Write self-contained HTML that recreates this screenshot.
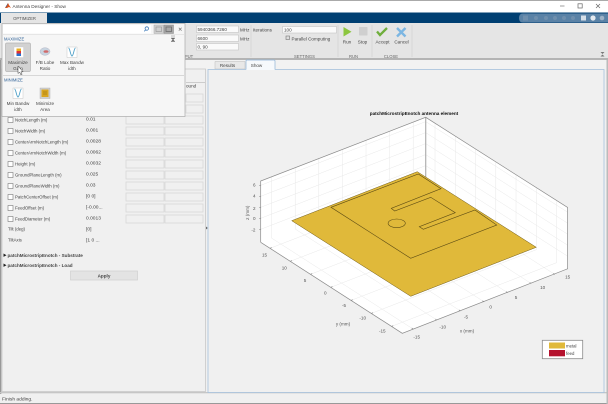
<!DOCTYPE html>
<html><head><meta charset="utf-8"><style>
html,body{margin:0;padding:0;background:#f0f0f0;width:608px;height:404px;overflow:hidden}
svg{position:absolute;left:0;top:0;filter:blur(.3px)}
text{font-family:"Liberation Sans",sans-serif;font-size:4.6px;fill:#444}
.c{text-anchor:middle}
.b{fill:#f0f0f0;stroke:#d4d4d4;stroke-width:.7}
.f{fill:#fafafa;stroke:#c4c4c4;stroke-width:.6}
.cb{fill:#fff;stroke:#777;stroke-width:.6}
.g{stroke:#e8e8e8;stroke-width:.5;fill:none}
.e{stroke:#8a8a8a;stroke-width:.7;fill:none}
#rows text{font-size:4.35px}
#rows text.v,text.v{font-size:4.9px}
.plot text{fill:#555;font-size:4.6px}
</style></head><body>
<svg width="608" height="404" viewBox="0 0 608 404" xmlns="http://www.w3.org/2000/svg">
<!-- chrome -->
<rect width="608" height="404" fill="#f0f0f0"/>
<rect width="608" height="13" fill="#fff"/>
<rect width="608" height="1" fill="#aaa"/>
<path d="M5 8l3-5 1 2 2 3-2-1-2 1z" fill="#d9541e"/>
<path d="M5 8l2-2 1-3z" fill="#2a5c9a"/>
<text x="12.500" y="7.800" style="font-size:4.700px">Antenna Designer - Show</text>
<path d="M560 6h4.500" stroke="#888" stroke-width=".8"/>
<rect x="578" y="3.800" width="4.200" height="4.200" fill="none" stroke="#666" stroke-width=".7"/>
<path d="M596 4l4 4m0-4l-4 4" stroke="#666" stroke-width=".7"/>
<rect y="12.500" width="608" height="10.500" fill="#003f72"/>
<path d="M523 13.500H608V22.500H523Q519 22.500 519 18T523 13.500Z" fill="#5a82a6"/>
<g fill="#6f8fad"><rect x="523" y="15.500" width="5" height="5"/><circle cx="536" cy="18" r="2"/><circle cx="546" cy="18" r="2"/><circle cx="555" cy="18" r="2"/><circle cx="564" cy="18" r="2"/><circle cx="573" cy="18" r="2"/></g>
<rect x="581" y="15.500" width="5" height="5" fill="#d5dfe8"/><circle cx="593" cy="18" r="2.600" fill="#e4eaf0"/><circle cx="602" cy="18" r="2.300" fill="#9db2c6"/>
<rect x="1" y="13" width="46" height="11" fill="#e5e5e5"/>
<text x="24.500" y="20.200" class="c" style="font-size:4.200px;fill:#555">OPTIMIZER</text>
<!-- ribbon -->
<rect y="23" width="608" height="35" fill="#e5e5e5"/>
<rect y="58" width="608" height="2" fill="#b4b4b4"/>
<rect y="60" width="608" height="9" fill="#f2f2f2"/>
<g stroke="#d2d2d2" stroke-width=".7"><path d="M251 25V57M338 25V57M372 25V57M412 25V57"/></g>
<rect class="f" x="196.500" y="26" width="42" height="6.500"/>
<rect class="f" x="196.500" y="35" width="42" height="6.500"/>
<rect class="f" x="196.500" y="43.500" width="42" height="6.500"/>
<text x="197.500" y="31">5940366.7260</text><text x="197.500" y="40">6600</text><text x="197.500" y="48.500">0, 90</text>
<text x="240" y="31.500">MHz</text><text x="240" y="40.500">MHz</text>
<text x="253" y="31.500">Iterations</text>
<rect class="f" x="282.500" y="26.500" width="54" height="6.500"/>
<text x="284" y="31.500">100</text>
<rect x="286" y="36" width="3.500" height="3.500" fill="#ddd" stroke="#777" stroke-width=".6"/>
<text x="291.500" y="40.300">Parallel Computing</text>
<text x="304.500" y="58" class="c" style="font-size:4.200px;fill:#666">SETTINGS</text>
<text x="353.500" y="58" class="c" style="font-size:4.200px;fill:#666">RUN</text>
<text x="391" y="58" class="c" style="font-size:4.200px;fill:#666">CLOSE</text>
<text x="189" y="58" class="c" style="font-size:4.200px;fill:#666">PUT</text>
<path d="M343.500 27V36.500L351.500 31.700Z" fill="#8cc63f"/>
<rect x="359" y="27" width="8.500" height="8.500" rx=".5" fill="#cfcfcf"/>
<text x="347" y="43.500" class="c">Run</text><text x="362.500" y="43.500" class="c">Stop</text>
<path d="M377 31.500l3 3.500 7-7" stroke="#6fae3c" stroke-width="2.300" fill="none"/>
<path d="M397 28l8.500 8.500m0-8.500l-8.500 8.500" stroke="#7cb6e2" stroke-width="2.400" fill="none"/>
<text x="382.500" y="43.500" class="c">Accept</text><text x="401.500" y="43.500" class="c">Cancel</text>
<path d="M600.500 52h4l-2 2zM600.500 56.500h4l-2-2z" fill="#777"/>
<!-- left panel -->
<rect x="0" y="60" width="1.300" height="334" fill="#999"/>
<rect x="2" y="69" width="203.500" height="322.500" fill="#f0f0f0" stroke="#c8c8c8" stroke-width=".8"/>
<rect x="186" y="82" width="19" height="1" fill="#ccc"/>
<text x="186" y="87.500">ound</text>
<rect class="b" x="186" y="94" width="17" height="8"/><rect class="b" x="186" y="105" width="17" height="8"/>
<g id="rows">
<rect class="b" x="126" y="116" width="38" height="8"/><rect class="b" x="165" y="116" width="38" height="8"/>
<rect class="b" x="126" y="127" width="38" height="8"/><rect class="b" x="165" y="127" width="38" height="8"/>
<rect class="b" x="126" y="138" width="38" height="8"/><rect class="b" x="165" y="138" width="38" height="8"/>
<rect class="b" x="126" y="149" width="38" height="8"/><rect class="b" x="165" y="149" width="38" height="8"/>
<rect class="b" x="126" y="160" width="38" height="8"/><rect class="b" x="165" y="160" width="38" height="8"/>
<rect class="b" x="126" y="171" width="38" height="8"/><rect class="b" x="165" y="171" width="38" height="8"/>
<rect class="b" x="126" y="182" width="38" height="8"/><rect class="b" x="165" y="182" width="38" height="8"/>
<rect class="b" x="126" y="193" width="38" height="8"/><rect class="b" x="165" y="193" width="38" height="8"/>
<rect class="b" x="126" y="204" width="38" height="8"/><rect class="b" x="165" y="204" width="38" height="8"/>
<rect class="b" x="126" y="215" width="38" height="8"/><rect class="b" x="165" y="215" width="38" height="8"/>
<rect class="cb" x="8" y="117.500" width="5" height="5"/><text x="15" y="121.600">NotchLength (m)</text><text class="v" x="86" y="120.300">0.01</text>
<rect class="cb" x="8" y="128.500" width="5" height="5"/><text x="15" y="132.600">NotchWidth (m)</text><text class="v" x="86" y="131.300">0.001</text>
<rect class="cb" x="8" y="139.500" width="5" height="5"/><text x="15" y="143.600">CenterArmNotchLength (m)</text><text class="v" x="86" y="142.300">0.0028</text>
<rect class="cb" x="8" y="150.500" width="5" height="5"/><text x="15" y="154.600">CenterArmNotchWidth (m)</text><text class="v" x="86" y="153.300">0.0062</text>
<rect class="cb" x="8" y="161.500" width="5" height="5"/><text x="15" y="165.600">Height (m)</text><text class="v" x="86" y="164.300">0.0032</text>
<rect class="cb" x="8" y="172.500" width="5" height="5"/><text x="15" y="176.600">GroundPlaneLength (m)</text><text class="v" x="86" y="175.300">0.025</text>
<rect class="cb" x="8" y="183.500" width="5" height="5"/><text x="15" y="187.600">GroundPlaneWidth (m)</text><text class="v" x="86" y="186.300">0.03</text>
<rect class="cb" x="8" y="194.500" width="5" height="5"/><text x="15" y="198.600">PatchCenterOffset (m)</text><text class="v" x="86" y="197.300">[0 0]</text>
<rect class="cb" x="8" y="205.500" width="5" height="5"/><text x="15" y="209.600">FeedOffset (m)</text><text class="v" x="86" y="208.300">[-0.00...</text>
<rect class="cb" x="8" y="216.500" width="5" height="5"/><text x="15" y="220.600">FeedDiameter (m)</text><text class="v" x="86" y="219.300">0.0013</text>
<text x="8" y="230.500">Tilt (deg)</text><text class="v" x="86" y="230.500">[0]</text>
<text x="8" y="241.500">TiltAxis</text><text class="v" x="86" y="241.500">[1  0 ...</text>
</g>
<path d="M3.500 253.500l3 1.700-3 1.700zM3.500 263.500l3 1.700-3 1.700z" fill="#222"/>
<text x="7.500" y="256.800" style="font-weight:bold">patchMicrostripEnotch - Substrate</text>
<text x="7.500" y="266.800" style="font-weight:bold">patchMicrostripEnotch - Load</text>
<rect x="70.500" y="271" width="67" height="9" fill="#e3e3e3" stroke="#cfcfcf" stroke-width=".7"/>
<text x="104" y="277.500" class="c" style="font-weight:bold">Apply</text>
<!-- status -->
<rect y="392" width="608" height="1.300" fill="#c6c6c6"/>
<rect y="403" width="608" height="1" fill="#999"/>
<text class="v" x="2" y="400.500">Finish adding.</text>
<!-- popup -->
<rect x="2" y="23.500" width="183" height="93" fill="#f6f6f6" stroke="#aaa" stroke-width=".7"/>
<rect x="3" y="25" width="148" height="8.500" fill="#fff"/>
<circle cx="146.800" cy="28.500" r="1.700" fill="none" stroke="#3a78b8" stroke-width=".8"/><path d="M145.500 30l-1.200 1.300" stroke="#3a78b8" stroke-width=".8"/>
<rect x="154" y="25" width="9.500" height="8.500" fill="#cfcfcf" stroke="#aaa" stroke-width=".5"/>
<rect x="164" y="25" width="9.500" height="8.500" fill="#a9a9a9" stroke="#888" stroke-width=".5"/>
<rect x="156" y="27" width="5.500" height="4.500" fill="none" stroke="#888" stroke-width=".5"/>
<rect x="166" y="27" width="5.500" height="4.500" fill="none" stroke="#666" stroke-width=".7"/>
<path d="M178.800 27.800l2.800 2.800m0-2.800l-2.800 2.800" stroke="#777" stroke-width=".7"/>
<path d="M171 36h4M171 38h4l-2 1.800zM171 41.500h4l-2-1.800z" stroke="#666" stroke-width=".4" fill="#666"/>
<rect x="3" y="34" width="181" height=".6" fill="#ddd"/>
<text x="4" y="40.300" style="fill:#2c5f95;font-size:4.200px">MAXIMIZE</text>
<rect x="5.500" y="43" width="25" height="28.500" rx="1.500" fill="#d2d2d2" stroke="#b4b4b4" stroke-width=".7"/>
<rect x="14" y="47" width="9.500" height="10.500" fill="#fff" stroke="#ccc" stroke-width=".4"/>
<rect x="16.500" y="48.500" width="4.500" height="2.500" fill="#e8b020"/><rect x="16.500" y="51" width="4.500" height="2.500" fill="#e03030"/><rect x="16.500" y="53.500" width="4.500" height="2.500" fill="#2a70d0"/>
<text x="18" y="63.800" class="c">Maximize</text><text x="18" y="69.800" class="c">Gain</text>
<ellipse cx="45" cy="51.500" rx="5" ry="3.800" fill="#c8d4e0" stroke="#aab" stroke-width=".4"/><ellipse cx="46" cy="51.500" rx="2.500" ry="1.300" fill="#d06a6a"/>
<text x="45" y="63.800" class="c">F/B Lobe</text><text x="45" y="69.800" class="c">Ratio</text>
<rect x="67" y="47" width="10" height="10.500" fill="#fff" stroke="#bbb" stroke-width=".4"/>
<path d="M68.500 48c1.500 0 2 8 3.500 8s2-8 3.500-8" fill="none" stroke="#4fa0c8" stroke-width=".9"/>
<text x="72" y="63.800" class="c">Max Bandw</text><text x="72" y="69.800" class="c">idth</text>
<rect x="3" y="75" width="181" height=".8" fill="#cfcfcf"/>
<text x="4" y="81.300" style="fill:#2c5f95;font-size:4.200px">MINIMIZE</text>
<rect x="13" y="88" width="10" height="10.500" fill="#fff" stroke="#bbb" stroke-width=".4"/>
<path d="M14.500 89c1.500 0 2 8 3.500 8s2-8 3.500-8" fill="none" stroke="#4fa0c8" stroke-width=".9"/>
<text x="18" y="104.800" class="c">Min Bandw</text><text x="18" y="110.800" class="c">idth</text>
<rect x="40" y="88" width="10" height="10.500" fill="#cfcfcf" stroke="#aaa" stroke-width=".4"/>
<rect x="41.500" y="89.500" width="7" height="7.500" fill="#d9a520"/><path d="M43 92h4M43 94h4" stroke="#8a6a10" stroke-width=".5"/>
<text x="45" y="104.800" class="c">Minimize</text><text x="45" y="110.800" class="c">Area</text>
<path d="M18 66v7.500l1.700-1.300 1.200 2.600 1.200-.5-1.200-2.500h2.200z" fill="#fff" stroke="#333" stroke-width=".5"/>
<!-- right panel -->
<path d="M215 69V61.500h30V69z" fill="#e8e8e8" stroke="#bbb" stroke-width=".5"/>
<text x="227.500" y="66.800" class="c">Results</text>
<path d="M246 69.500V61q0-1 1-1h27q1 0 1 1v8.500" fill="#f6f9fc" stroke="#8fb3d6" stroke-width=".7"/>
<text x="256.500" y="66.800" class="c">Show</text>
<rect x="208" y="69.500" width="396" height="323" fill="#f0f0f0" stroke="#a6c1dc" stroke-width=".8"/>
<rect x="246.300" y="69" width="28.400" height="1" fill="#f6f9fc"/>
<path d="M206.300 226.500l1.200 1.500-1.200 1.500z" fill="#222"/>
<rect x="606.500" y="60" width="1.500" height="344" fill="#bbb"/>
<!-- walls + floor -->
<path d="M260.700 181L425.700 117.300 567.600 207.500 567.600 268.800 402.300 333.300 260.700 242.300Z" fill="#fff"/>
<g class="g">
<path d="M260.700 229.300L425.700 165.600 567.300 256M260.700 218.300L425.700 154.600 567.300 245M260.700 207.300L425.700 143.600 567.300 234M260.700 196.300L425.700 132.600 567.300 223M260.700 185.300L425.700 121.600 567.300 212"/>
<path d="M271.600 238.100V176.800M295.200 229V167.700M318.800 219.900V158.600M342.400 210.800V149.500M366 201.700V140.400M389.600 192.500V131.200M413.200 183.400V122.100"/>
<path d="M435 184.600V123.300M455.300 197.600V136.300M475.500 210.600V149.300M495.800 223.600V162.300M516 236.700V175.400M536.300 249.700V188.400M556.500 262.700V201.400"/>
<path d="M270 248.300L435 184.600M290.300 261.300L455.300 197.600M310.500 274.300L475.500 210.600M330.800 287.300L495.800 223.600M351 300.400L516 236.700M371.300 313.400L536.300 249.700M391.500 326.400L556.500 262.700"/>
<path d="M413.200 329.100L271.600 238.100M436.800 320L295.200 229M460.400 310.900L318.800 219.900M484 301.800L342.400 210.800M507.600 292.700L366 201.700M531.200 283.500L389.600 192.500M554.800 274.400L413.200 183.400"/>
</g>
<path d="M425.700 117.300V178.600" stroke="#b0b0b0" stroke-width="1.200"/>
<path class="e" d="M260.700 242.300V181L425.700 117.300 567.600 207.500V268.800L402.300 333.300 260.700 242.300"/>
<path class="e" d="M270 248.300l1.700-.7M290.300 261.300l1.700-.7M310.500 274.300l1.700-.7M330.800 287.300l1.700-.7M351 300.400l1.700-.7M371.300 313.400l1.700-.7M391.500 326.400l1.700-.7M413.200 329.100l-1.500-1M436.800 320l-1.500-1M460.400 310.900l-1.500-1M484 301.800l-1.500-1M507.600 292.700l-1.500-1M531.200 283.500l-1.500-1M554.800 274.400l-1.500-1M260.700 229.300h-1.500M260.700 218.300h-1.500M260.700 207.300h-1.500M260.700 196.300h-1.500M260.700 185.300h-1.500"/>
<!-- plate -->
<path d="M417.300 171.700L291.700 220.700 410.700 296.300 536.300 247.300Z" fill="#e0b93a" stroke="#6e5a1a" stroke-width=".5"/>
<path d="M331 207.300L418.300 174 441 188.700 391.300 208.300 394.700 211 430.700 197.300 455.300 212.700 419.300 226.700 423.300 229.300 475 210 496.700 225 410.700 258.300Z" fill="none" stroke="#5c4b14" stroke-width=".6"/>
<ellipse cx="396.700" cy="223.300" rx="8.600" ry="4.300" fill="none" stroke="#5c4b14" stroke-width=".6"/>
<!-- plot text -->
<text x="414" y="115" class="c" style="fill:#111;font-weight:bold;font-size:4.650px">patchMicrostripEnotch antenna element</text>
<g class="plot">
<text x="255.500" y="186.700" text-anchor="end">6</text><text x="255.500" y="197.700" text-anchor="end">4</text><text x="255.500" y="210" text-anchor="end">2</text><text x="255.500" y="220" text-anchor="end">0</text><text x="255.500" y="231.700" text-anchor="end">-2</text>
<text transform="translate(248.800 212.700) rotate(-90)" class="c">z (mm)</text>
<text x="264.500" y="256.700" class="c">15</text><text x="284.300" y="269.400" class="c">10</text><text x="305" y="282" class="c">5</text><text x="325.300" y="294.400" class="c">0</text><text x="344" y="307" class="c">-5</text><text x="362.700" y="319.700" class="c">-10</text><text x="382.300" y="332.400" class="c">-15</text>
<text x="343" y="325.700" class="c">y (mm)</text>
<text x="416.700" y="338.400" class="c">-15</text><text x="442.700" y="328.400" class="c">-10</text><text x="466" y="318.400" class="c">-5</text><text x="490.700" y="308.400" class="c">0</text><text x="516" y="299" class="c">5</text><text x="542.700" y="289" class="c">10</text><text x="567.700" y="278.400" class="c">15</text>
<text x="467" y="332.400" class="c">x (mm)</text>
</g>
<!-- legend -->
<rect x="542.300" y="340.300" width="40.400" height="18.400" fill="#fff" stroke="#8a8a8a" stroke-width=".8"/>
<rect x="549" y="342.500" width="16" height="6" fill="#e0b93a"/>
<rect x="549" y="350" width="16" height="6.300" fill="#b5122e"/>
<text x="566" y="347.500" style="font-size:4.300px">metal</text>
<text x="566" y="355" style="font-size:4.300px">feed</text>
</svg>
</body></html>
